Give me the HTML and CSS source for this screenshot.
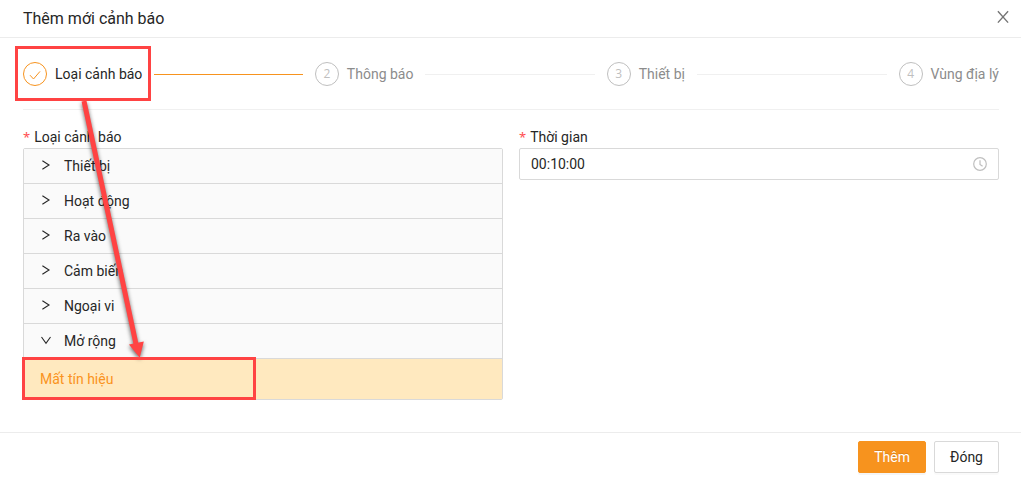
FILE: index.html
```html
<!DOCTYPE html>
<html lang="vi">
<head>
<meta charset="utf-8">
<meta name="viewport" content="width=device-width, initial-scale=1">
<title>Thêm mới cảnh báo</title>
<link rel="stylesheet" href="styles.css">
</head>
<body>
<div class="dialog" role="dialog" aria-labelledby="dialog-title">
  <header class="dialog-header">
    <h1 class="dialog-title" id="dialog-title">Thêm mới cảnh báo</h1>
    <button class="close" type="button" aria-label="Close">
      <svg width="12" height="14" viewBox="0 0 12 14" aria-hidden="true"><path d="M.9 1.2 11.1 12.6M11.1 1.2.9 12.6"/></svg>
    </button>
  </header>

  <main class="dialog-body">
    <ol class="steps">
      <li class="step step-active">
        <span class="step-icon"><svg width="12" height="12" viewBox="0 0 12 12" aria-hidden="true"><path d="M1 7.200 4.500 11 11 3.400"/></svg></span>
        <span class="step-title">Loại cảnh báo</span>
      </li>
      <li class="step">
        <span class="step-icon">2</span>
        <span class="step-title">Thông báo</span>
      </li>
      <li class="step">
        <span class="step-icon">3</span>
        <span class="step-title">Thiết bị</span>
      </li>
      <li class="step">
        <span class="step-icon">4</span>
        <span class="step-title">Vùng địa lý</span>
      </li>
    </ol>

    <form class="form" id="alert-form">
      <div class="field">
        <span class="label" id="type-label">Loại cảnh báo</span>
        <div class="collapse" role="group" aria-labelledby="type-label">
          <button class="panel" type="button" aria-expanded="false"><svg class="chevron" viewBox="0 0 10 10" aria-hidden="true"><path d="M1.400.8 8 5 1.400 9.200"/></svg>Thiết bị</button>
          <button class="panel" type="button" aria-expanded="false"><svg class="chevron" viewBox="0 0 10 10" aria-hidden="true"><path d="M1.400.8 8 5 1.400 9.200"/></svg>Hoạt động</button>
          <button class="panel" type="button" aria-expanded="false"><svg class="chevron" viewBox="0 0 10 10" aria-hidden="true"><path d="M1.400.8 8 5 1.400 9.200"/></svg>Ra vào</button>
          <button class="panel" type="button" aria-expanded="false"><svg class="chevron" viewBox="0 0 10 10" aria-hidden="true"><path d="M1.400.8 8 5 1.400 9.200"/></svg>Cảm biến</button>
          <button class="panel" type="button" aria-expanded="false"><svg class="chevron" viewBox="0 0 10 10" aria-hidden="true"><path d="M1.400.8 8 5 1.400 9.200"/></svg>Ngoại vi</button>
          <button class="panel" type="button" aria-expanded="true"><svg class="chevron" viewBox="0 0 10 10" aria-hidden="true"><path d="M.5 2 5 8.200 9.500 2"/></svg>Mở rộng</button>
          <button class="option" type="button" aria-pressed="true">Mất tín hiệu</button>
        </div>
      </div>

      <div class="field">
        <label class="label" for="time">Thời gian</label>
        <div class="time">
          <input class="time-input" id="time" type="text" value="00:10:00" required>
          <svg class="clock" width="14" height="14" viewBox="0 0 14 14" aria-hidden="true"><circle cx="7" cy="7" r="6.300"/><path d="M7 3.300V7.400L9.600 9.300"/></svg>
        </div>
      </div>
    </form>
  </main>

  <footer class="dialog-footer">
    <button class="btn btn-primary" type="submit" form="alert-form">Thêm</button>
    <button class="btn" type="button">Đóng</button>
  </footer>

  <svg class="callouts" width="272" height="416" viewBox="0 0 272 416" aria-hidden="true">
    <g class="arrow">
      <path class="shaft" d="M84 101 136 344"/>
      <path class="head" d="M129 344.500 143.800 341.500 139.700 357.700Z"/>
    </g>
    <rect x="16.500" y="47.500" width="133" height="52"/>
    <rect x="23.500" y="358.500" width="231" height="40"/>
  </svg>
</div>
</body>
</html>
```

FILE: styles.css
```css
* {
  box-sizing: border-box;
}

body {
  margin: 0;
  background: #fff;
  color: #262626;
  font: 14px/22px Roboto, "Noto Sans", sans-serif;
}

button,
input {
  font: inherit;
  color: inherit;
}

svg {
  fill: none;
  stroke: currentColor;
}

.dialog {
  position: relative;
}

.dialog-header {
  display: flex;
  align-items: center;
  justify-content: space-between;
  height: 38px;
  padding: 0 12px 0 23px;
  border-bottom: 1px solid #ececec;
}

.dialog-title {
  margin: 0;
  font-size: 16px;
  font-weight: 400;
}

.close {
  display: flex;
  padding: 0 0 3px;
  border: 0;
  background: none;
  color: #757575;
  stroke-width: 1.4;
  cursor: pointer;
}

.dialog-body {
  padding: 0 22px 32px 23px;
}

.steps {
  display: flex;
  gap: 12px;
  margin: 0;
  padding: 24px 0 23px;
  border-bottom: 1px solid #f0f0f0;
  list-style: none;
}

.step {
  display: flex;
  flex: 1;
  align-items: center;
  color: #8c8c8c;
}

.step::after {
  content: "";
  flex: 1;
  height: 1px;
  margin-left: 12px;
  background: #f0f0f0;
}

.step:last-child {
  flex: none;
}

.step:last-child::after {
  display: none;
}

.step-icon {
  display: flex;
  align-items: center;
  justify-content: center;
  width: 24px;
  height: 24px;
  margin-right: 8px;
  border: 1px solid #bfbfbf;
  border-radius: 50%;
  color: #bfbfbf;
  font-family: "Open Sans", "Noto Sans", sans-serif;
  font-size: 12px;
}

.step-active {
  color: #262626;
}

.step-active .step-icon {
  border-color: #f7931e;
  color: #f7931e;
}

.step-active::after {
  background: #f7931e;
}

.form {
  display: grid;
  grid-template-columns: 1fr 1fr;
  align-items: start;
  gap: 16px;
  padding-top: 16px;
}

.label {
  display: flex;
  gap: 4px;
}

.label::before {
  content: "*";
  color: #ff4d4f;
  font-family: "Noto Sans", sans-serif;
  font-size: 13px;
}

.collapse {
  border: 1px solid #d9d9d9;
  border-radius: 2px;
}

.panel,
.option {
  display: flex;
  align-items: center;
  width: 100%;
  border: 0;
  text-align: left;
  cursor: pointer;
}

.panel {
  height: 35px;
  padding: 0 17px;
  border-bottom: 1px solid #d9d9d9;
  background: #fafafa;
}

.chevron {
  width: 10px;
  height: 10px;
  margin: 0 13px 2px 0;
  stroke-width: 1.1;
}

.option {
  height: 40px;
  padding: 0 16px;
  background: #ffe9bf;
  color: #fa9320;
}

.time {
  display: flex;
  align-items: center;
  height: 32px;
  padding: 0 11px;
  border: 1px solid #d9d9d9;
  border-radius: 2px;
}

.time-input {
  flex: 1;
  min-width: 0;
  padding: 0;
  border: 0;
  outline: 0;
  background: none;
}

.clock {
  color: #bfbfbf;
  stroke-width: 1.2;
}

.dialog-footer {
  display: flex;
  justify-content: flex-end;
  gap: 8px;
  padding: 8px 22px 6px;
  border-top: 1px solid #ececec;
}

.btn {
  height: 32px;
  padding: 0 15px;
  border: 1px solid #d9d9d9;
  border-radius: 2px;
  background: #fff;
  box-shadow: 0 2px 0 rgba(0, 0, 0, 0.02);
  cursor: pointer;
}

.btn-primary {
  border-color: #f7931e;
  background: #f7931e;
  color: #fff;
  box-shadow: 0 2px 0 rgba(0, 0, 0, 0.04);
  text-shadow: 0 -1px 0 rgba(0, 0, 0, 0.12);
}

.callouts {
  position: absolute;
  top: 0;
  left: 0;
  color: #ff4343;
  stroke-width: 3;
  pointer-events: none;
}

.arrow {
  filter: drop-shadow(0 2px 2px rgba(0, 0, 0, 0.6));
}

.shaft {
  stroke-width: 5;
}

.head {
  fill: currentColor;
  stroke: none;
}
```
